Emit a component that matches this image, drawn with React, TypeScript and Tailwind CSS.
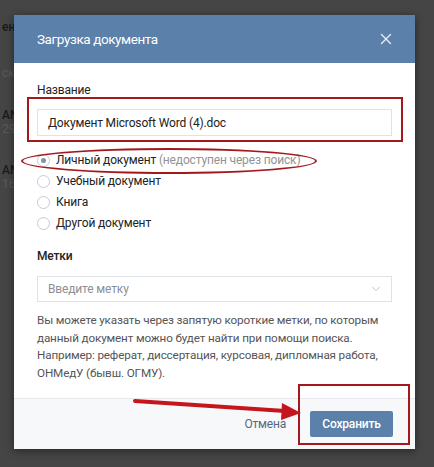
import { X, ChevronDown } from "lucide-react";

const types = [
  { label: "Личный документ", hint: "(недоступен через поиск)", checked: true },
  { label: "Учебный документ" },
  { label: "Книга" },
  { label: "Другой документ" },
];

const Radio = ({ checked }: { checked?: boolean }) => (
  <span className="w-[13px] h-[13px] rounded-full border border-[#c5ccd3] bg-white flex items-center justify-center shrink-0">
    {checked && <span className="w-[5px] h-[5px] rounded-full bg-[#7e93aa]" />}
  </span>
);

export default function App() {
  return (
    <div
      className="relative w-[434px] h-[467px] overflow-hidden bg-[#454545]"
      style={{ fontFamily: "Roboto, 'Open Sans', sans-serif" }}
    >
      {/* page behind the overlay */}
      <div className="absolute left-[2px] top-[20px] text-[12px] leading-[14px] text-[#1a1a1a] font-medium whitespace-nowrap">
        <div>ент</div>
        <div className="mt-[32px] text-[#5a5a5a] font-normal">ск</div>
        <div className="mt-[28px]">AN</div>
        <div className="text-[#5a5a5a] font-normal">29</div>
        <div className="mt-[27px]">AN</div>
        <div className="text-[#5a5a5a] font-normal">16</div>
      </div>

      <div className="relative ml-[14px] mt-[15px] w-[401px] bg-white shadow-[0_2px_8px_rgba(0,0,0,0.45)]">
        {/* header */}
        <div className="h-[48px] bg-[#5b80a9] flex items-center justify-between pl-[23px] pr-[20px]">
          <span className="text-white text-[13.5px] tracking-[-0.4px]">Загрузка документа</span>
          <X className="w-[18px] h-[18px] text-[#e8eef5]" strokeWidth={1.8} />
        </div>

        {/* body */}
        <div className="px-[23px] pt-[19px] pb-[16px] tracking-[-0.15px]">
          <div className="text-[12px] text-[#222] leading-[16px]">Название</div>
          <div className="mt-[11px] h-[27px] border border-[#dfe3e8] flex items-center px-[10px] text-[12px] text-[#222]">
            Документ Microsoft Word (4).doc
          </div>

          <div className="mt-[16px] flex flex-col gap-[5px]">
            {types.map((t) => (
              <div key={t.label} className="h-[16px] flex items-center gap-[6px] text-[12px] text-[#222]">
                <Radio checked={t.checked} />
                <span>
                  {t.label}
                  {t.hint && <span className="text-[#939393]"> {t.hint}</span>}
                </span>
              </div>
            ))}
          </div>

          <div className="mt-[17px] text-[12px] text-[#222] font-medium leading-[16px]">Метки</div>
          <div className="mt-[12px] h-[26px] border border-[#dfe3e8] flex items-center justify-between pl-[10px] pr-[8px] text-[12px] text-[#8a8f96]">
            <span>Введите метку</span>
            <ChevronDown className="w-[14px] h-[14px] text-[#b8bfc7]" strokeWidth={1.5} />
          </div>

          <p className="mt-[10px] text-[11.7px] leading-[17.5px] text-[#555]">
            Вы можете указать через запятую короткие метки, по которым данный документ можно будет найти при помощи поиска. Например: реферат, диссертация, курсовая, дипломная работа, ОНМедУ (бывш. ОГМУ).
          </p>
        </div>

        {/* footer */}
        <div className="h-[51px] bg-[#f7f8fa] border-t border-[#e7e8ec] flex items-center justify-end gap-[24px] pr-[22px] tracking-[-0.2px]">
          <span className="text-[12px] text-[#55677d]">Отмена</span>
          <button className="w-[83px] h-[26px] bg-[#5b80a9] text-white text-[12px] font-medium rounded-[2px]">
            Сохранить
          </button>
        </div>
      </div>

      {/* annotations */}
      <div className="absolute left-[27px] top-[97px] w-[376px] h-[45px] border-2 border-[#a3171d]" />
      <div className="absolute left-[21px] top-[148px] w-[296px] h-[26px] rounded-[50%] border-2 border-[#a3171d]" />
      <div className="absolute left-[298px] top-[384px] w-[112px] h-[61px] border-2 border-[#a3171d]" />
      <svg className="absolute left-0 top-0" width="434" height="467">
        <line x1="135" y1="401" x2="285" y2="411" stroke="#c4161c" strokeWidth="4" strokeLinecap="round" />
        <polygon points="301,413 282,403 281,420" fill="#c4161c" />
      </svg>
    </div>
  );
}
